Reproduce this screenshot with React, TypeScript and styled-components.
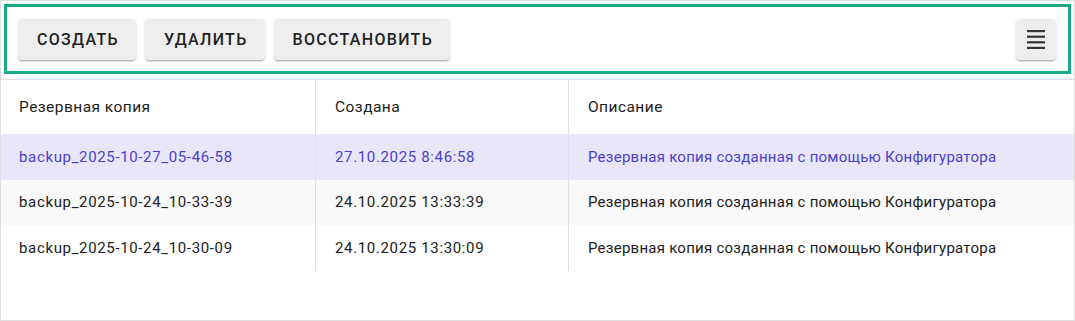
import React from "react";
import styled, { createGlobalStyle } from "styled-components";

const Global = createGlobalStyle`
  html, body { margin: 0; padding: 0; background: #fff; }
  body { font-family: Roboto, "Liberation Sans", Arial, sans-serif; }
  * { box-sizing: border-box; }
`;

const Frame = styled.div`
  width: 1075px;
  height: 321px;
  border: 1px solid #dddddd;
  background: #fff;
  display: flex;
  flex-direction: column;
`;

const Toolbar = styled.div`
  margin: 3px 3px 0 3px;
  height: 70px;
  border: 3px solid #1aaa89;
  display: flex;
  align-items: center;
  padding: 0 12px 0 11px;
  gap: 9px;
`;

const Spacer = styled.div`
  flex: 1;
`;

const Button = styled.button<{ $square?: boolean }>`
  height: 41px;
  ${(p) => (p.$square ? "width: 40px; padding: 0;" : "padding: 0 17px 0 19px;")}
  border: none;
  border-radius: 4px;
  background: #eeeeee;
  box-shadow: 0 2px 2px -1px rgba(0, 0, 0, 0.3), 0 1px 3px rgba(0, 0, 0, 0.12);
  font-family: Roboto, "Liberation Sans", Arial, sans-serif;
  font-weight: 500;
  font-size: 16px;
  letter-spacing: 1.3px;
  color: #222;
  text-transform: uppercase;
  display: flex;
  align-items: center;
  justify-content: center;
  cursor: pointer;
`;

const Table = styled.div`
  margin-top: 5px;
  border-top: 1px solid #e0e0e0;
  display: flex;
  flex-direction: column;
`;

const Row = styled.div<{ $header?: boolean; $bg?: string; $selected?: boolean }>`
  display: grid;
  grid-template-columns: 315px 253px 1fr;
  height: ${(p) => (p.$header ? "54px" : "45.5px")};
  background: ${(p) => p.$bg || "#fff"};
  color: ${(p) => (p.$selected ? "#4c3fd0" : "#212121")};
`;

const Cell = styled.div<{ $first?: boolean; $last?: boolean; $numeric?: boolean }>`
  display: flex;
  align-items: center;
  padding-left: ${(p) => (p.$first ? "18px" : "19px")};
  font-size: 15px;
  letter-spacing: ${(p) => (p.$numeric ? "0.65px" : "0.25px")};
  border-right: ${(p) => (p.$last ? "none" : "1px solid #e0e0e0")};
  white-space: nowrap;
`;

const HeadCell = styled(Cell)`
  font-weight: 400;
  font-size: 15.5px;
  letter-spacing: 0.45px;
  color: #212121;
`;

const MenuIcon = () => (
  <svg width="18" height="19" viewBox="0 0 18 19">
    <rect x="0" y="0" width="18" height="2.2" fill="#333" />
    <rect x="0" y="5.6" width="18" height="2.2" fill="#333" />
    <rect x="0" y="11.2" width="18" height="2.2" fill="#333" />
    <rect x="0" y="16.8" width="18" height="2.2" fill="#333" />
  </svg>
);

const rows = [
  { name: "backup_2025-10-27_05-46-58", date: "27.10.2025 8:46:58", bg: "#e8e6f8", sel: true },
  { name: "backup_2025-10-24_10-33-39", date: "24.10.2025 13:33:39", bg: "#f9f9f9", sel: false },
  { name: "backup_2025-10-24_10-30-09", date: "24.10.2025 13:30:09", bg: "#ffffff", sel: false },
];

export default function App() {
  return (
    <>
      <Global />
      <Frame>
        <Toolbar>
          <Button>Создать</Button>
          <Button>Удалить</Button>
          <Button>Восстановить</Button>
          <Spacer />
          <Button $square>
            <MenuIcon />
          </Button>
        </Toolbar>
        <Table>
          <Row $header>
            <HeadCell $first>Резервная копия</HeadCell>
            <HeadCell>Создана</HeadCell>
            <HeadCell $last>Описание</HeadCell>
          </Row>
          {rows.map((r) => (
            <Row key={r.name} $bg={r.bg} $selected={r.sel}>
              <Cell $first $numeric>{r.name}</Cell>
              <Cell $numeric>{r.date}</Cell>
              <Cell $last>Резервная копия созданная с помощью Конфигуратора</Cell>
            </Row>
          ))}
        </Table>
      </Frame>
    </>
  );
}
